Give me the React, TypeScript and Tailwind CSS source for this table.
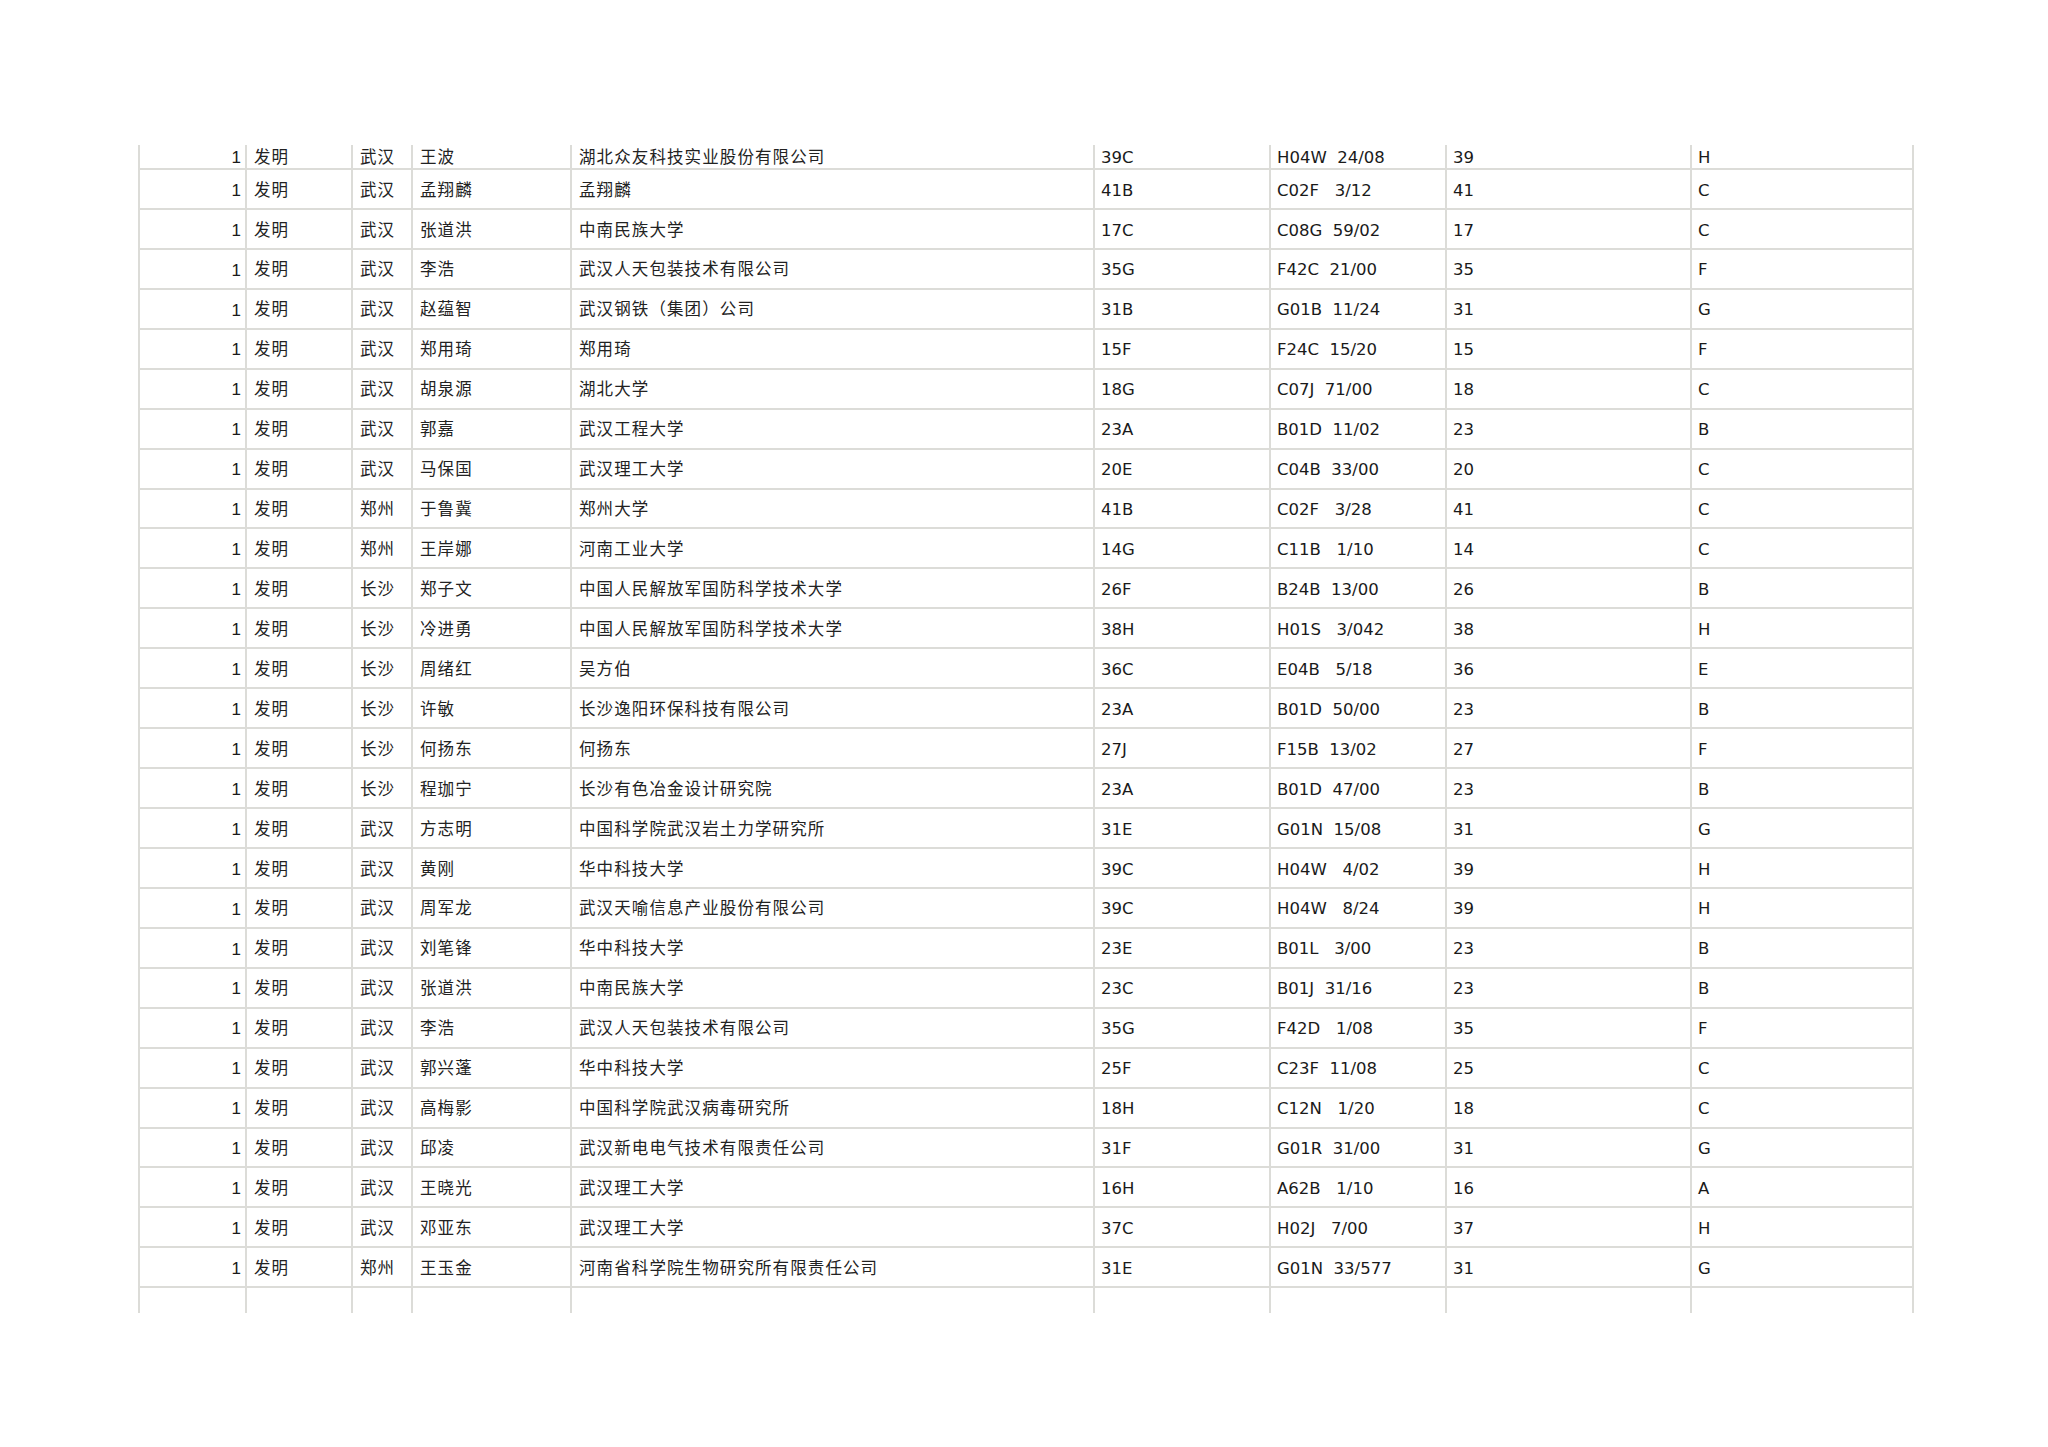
import React from "react";

type Row = [string, string, string, string, string, string, string];

const rows: Row[] = [
  ["武汉", "王波", "湖北众友科技实业股份有限公司", "39C", "H04W  24/08", "39", "H"],
  ["武汉", "孟翔麟", "孟翔麟", "41B", "C02F   3/12", "41", "C"],
  ["武汉", "张道洪", "中南民族大学", "17C", "C08G  59/02", "17", "C"],
  ["武汉", "李浩", "武汉人天包装技术有限公司", "35G", "F42C  21/00", "35", "F"],
  ["武汉", "赵蕴智", "武汉钢铁（集团）公司", "31B", "G01B  11/24", "31", "G"],
  ["武汉", "郑用琦", "郑用琦", "15F", "F24C  15/20", "15", "F"],
  ["武汉", "胡泉源", "湖北大学", "18G", "C07J  71/00", "18", "C"],
  ["武汉", "郭嘉", "武汉工程大学", "23A", "B01D  11/02", "23", "B"],
  ["武汉", "马保国", "武汉理工大学", "20E", "C04B  33/00", "20", "C"],
  ["郑州", "于鲁冀", "郑州大学", "41B", "C02F   3/28", "41", "C"],
  ["郑州", "王岸娜", "河南工业大学", "14G", "C11B   1/10", "14", "C"],
  ["长沙", "郑子文", "中国人民解放军国防科学技术大学", "26F", "B24B  13/00", "26", "B"],
  ["长沙", "冷进勇", "中国人民解放军国防科学技术大学", "38H", "H01S   3/042", "38", "H"],
  ["长沙", "周绪红", "吴方伯", "36C", "E04B   5/18", "36", "E"],
  ["长沙", "许敏", "长沙逸阳环保科技有限公司", "23A", "B01D  50/00", "23", "B"],
  ["长沙", "何扬东", "何扬东", "27J", "F15B  13/02", "27", "F"],
  ["长沙", "程珈宁", "长沙有色冶金设计研究院", "23A", "B01D  47/00", "23", "B"],
  ["武汉", "方志明", "中国科学院武汉岩土力学研究所", "31E", "G01N  15/08", "31", "G"],
  ["武汉", "黄刚", "华中科技大学", "39C", "H04W   4/02", "39", "H"],
  ["武汉", "周军龙", "武汉天喻信息产业股份有限公司", "39C", "H04W   8/24", "39", "H"],
  ["武汉", "刘笔锋", "华中科技大学", "23E", "B01L   3/00", "23", "B"],
  ["武汉", "张道洪", "中南民族大学", "23C", "B01J  31/16", "23", "B"],
  ["武汉", "李浩", "武汉人天包装技术有限公司", "35G", "F42D   1/08", "35", "F"],
  ["武汉", "郭兴蓬", "华中科技大学", "25F", "C23F  11/08", "25", "C"],
  ["武汉", "高梅影", "中国科学院武汉病毒研究所", "18H", "C12N   1/20", "18", "C"],
  ["武汉", "邱凌", "武汉新电电气技术有限责任公司", "31F", "G01R  31/00", "31", "G"],
  ["武汉", "王晓光", "武汉理工大学", "16H", "A62B   1/10", "16", "A"],
  ["武汉", "邓亚东", "武汉理工大学", "37C", "H02J   7/00", "37", "H"],
  ["郑州", "王玉金", "河南省科学院生物研究所有限责任公司", "31E", "G01N  33/577", "31", "G"],
];

const grid =
  "grid grid-cols-[107px_106px_60px_159px_523px_176px_176px_245px_222px] border-l-2 border-[#dcdcd8]";
const cell = "flex items-center border-r-2 border-[#dcdcd8] overflow-hidden whitespace-pre";
const cjk = "font-['Noto_Sans_CJK_SC',sans-serif] text-[16.5px] tracking-[1.1px] text-[#222] pl-[7px]";
const latin = "font-['DejaVu_Sans',sans-serif] text-[16.5px] text-[#1a1a1a] pl-[6px] pt-[4px]";

export default function App() {
  return (
    <div className="w-[2048px] h-[1447px] bg-white pt-[145px] pl-[138px]">
      <div className="w-[1776px]">
        {rows.map((r, i) => (
          <div
            key={i}
            className={`${grid} border-b-2 ${i === 0 ? "h-[25px]" : "h-[39.95px]"}`}
          >
            <div className={`${cell} justify-end pr-[4px] pt-[3px] font-['Liberation_Sans',sans-serif] text-[17px] text-[#1a1a1a]`}>1</div>
            <div className={`${cell} ${cjk}`}>发明</div>
            <div className={`${cell} ${cjk}`}>{r[0]}</div>
            <div className={`${cell} ${cjk}`}>{r[1]}</div>
            <div className={`${cell} ${cjk}`}>{r[2]}</div>
            <div className={`${cell} ${latin}`}>{r[3]}</div>
            <div className={`${cell} ${latin}`}>{r[4]}</div>
            <div className={`${cell} ${latin}`}>{r[5]}</div>
            <div className={`${cell} ${latin}`}>{r[6]}</div>
          </div>
        ))}
        <div className={`${grid} h-[25px]`}>
          {Array.from({ length: 9 }).map((_, j) => (
            <div key={j} className={cell} />
          ))}
        </div>
      </div>
    </div>
  );
}
